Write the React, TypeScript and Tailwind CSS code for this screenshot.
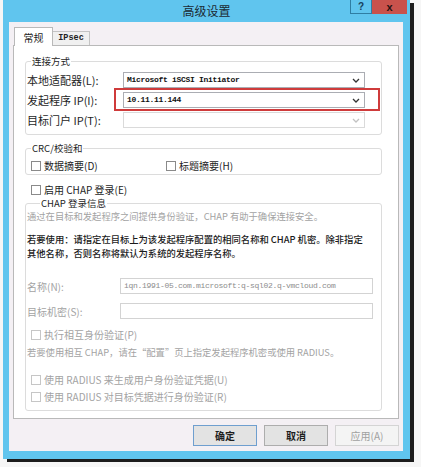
import React from 'react';

const cjk = "font-['Noto_Sans_CJK_SC','Liberation_Sans',sans-serif]";
const mono = "font-['Liberation_Mono',monospace]";

function Chevron({ disabled }: { disabled?: boolean }) {
  return (
    <svg width="8" height="5" viewBox="0 0 8 5" className="shrink-0">
      <path d="M1 1l3 3 3-3" stroke={disabled ? '#c2c2c2' : '#333'} strokeWidth="1.3" fill="none" />
    </svg>
  );
}

function Select({ value, disabled }: { value?: string; disabled?: boolean }) {
  return (
    <div className={`flex items-center w-[242px] h-[16px] border bg-white pl-[3px] pr-[4px] ${disabled ? 'border-[#dadada]' : 'border-[#abadb3]'}`}>
      <span className={`flex-1 ${mono} text-[8px] leading-[14px] font-bold tracking-[-0.3px] text-[#111] whitespace-nowrap`}>{value}</span>
      <Chevron disabled={disabled} />
    </div>
  );
}

function Box({ disabled }: { disabled?: boolean }) {
  return <span className={`inline-block shrink-0 w-[10px] h-[10px] border bg-white ${disabled ? 'border-[#c6c6c6]' : 'border-[#8a8a8a]'}`} />;
}

function Check({ label, disabled }: { label: string; disabled?: boolean }) {
  return (
    <div className="flex items-center gap-[3px] h-[12px]">
      <Box disabled={disabled} />
      <span className={`${cjk} text-[10px] leading-[12px] whitespace-nowrap ${disabled ? 'text-[#a3a3a3]' : 'text-[#1e1e1e]'}`}>{label}</span>
    </div>
  );
}

export default function App() {
  return (
    <div className={`w-[421px] h-[467px] bg-[#f6f6f6] pl-[3px] ${cjk}`}>
      <div className="w-[407px] h-[459px] bg-[#60c5ee] shadow-[4px_3px_0_#1c1c1c] flex flex-col">
        {/* title bar */}
        <div className="h-[22px] grid grid-cols-[1fr_auto_1fr]">
          <div />
          <div className="pt-[3px] text-[12px] leading-[15px] text-[#1b2a33]">高级设置</div>
          <div className="flex justify-end items-start pr-[3px]">
            <div className="w-[22px] h-[14px] border border-[#2f7ea3] border-t-0 flex items-center justify-center text-[10px] font-bold text-[#173f5c] font-['Liberation_Sans',sans-serif]">?</div>
            <div className="w-[35px] h-[14px] bg-[#c9524c] flex items-center justify-center text-[11px] leading-[12px] font-bold text-[#2a1212] font-['Liberation_Sans',sans-serif]">x</div>
          </div>
        </div>

        {/* client */}
        <div className="ml-[6px] w-[394px] h-[429px] bg-[#f4f0f4] flex flex-col px-[4px] pt-[5px]">
          <div className="flex items-end h-[18px]">
            <div className="ml-[1px] w-[39px] h-[19px] -mb-[1px] relative z-10 bg-white border border-[#b9b9b9] border-b-0 flex items-center justify-center text-[10px] text-[#1e1e1e]">常规</div>
            <div className={`w-[37px] h-[14px] bg-[#f0f0f0] border border-[#c4c4c4] border-b-0 border-l-0 flex items-center justify-center ${mono} text-[8.5px] font-bold text-[#222]`}>IPsec</div>
          </div>

          <div className="w-[386px] h-[374px] bg-white border border-[#b9b9b9] pt-[9px] pl-[11px]">
            {/* 连接方式 */}
            <fieldset className="w-[357px] border border-[#dcdcdc] rounded-[3px] pb-[6px]">
              <legend className="ml-[5px] px-[1px] text-[9.5px] leading-[12px] text-[#1e1e1e]">连接方式</legend>
              <div className="flex flex-col gap-[4px] mt-[5px] pl-[1px]">
                <div className="flex items-center h-[16px]">
                  <span className="w-[96px] text-[11px] text-[#1e1e1e] whitespace-nowrap">本地适配器(L):</span>
                  <Select value="Microsoft iSCSI Initiator" />
                </div>
                <div className="flex items-center h-[16px]">
                  <span className="w-[96px] text-[11px] text-[#1e1e1e] whitespace-nowrap">发起程序 IP(I):</span>
                  <div className="relative">
                    <Select value="10.11.11.144" />
                    <span className="absolute -left-[9px] -right-[15px] -top-[4px] -bottom-[3px] border-2 border-[#cf3b3b]" />
                  </div>
                </div>
                <div className="flex items-center h-[16px]">
                  <span className="w-[96px] text-[11px] text-[#1e1e1e] whitespace-nowrap">目标门户 IP(T):</span>
                  <Select disabled />
                </div>
              </div>
            </fieldset>

            {/* CRC */}
            <fieldset className="mt-[7px] w-[357px] border border-[#dcdcdc] rounded-[3px] pb-[2px]">
              <legend className="ml-[5px] px-[1px] text-[9.5px] leading-[12px] text-[#1e1e1e]">CRC/校验和</legend>
              <div className="flex mt-[6px] pl-[5px]">
                <div className="w-[135px]"><Check label="数据摘要(D)" /></div>
                <Check label="标题摘要(H)" />
              </div>
            </fieldset>

            <div className="mt-[9px] pl-[6px]">
              <Check label="启用 CHAP 登录(E)" />
            </div>

            {/* CHAP 登录信息 */}
            <fieldset className="mt-[1px] w-[357px] border border-[#dcdcdc] rounded-[3px] pb-[7px]">
              <legend className="ml-[14px] px-[1px] text-[9.5px] leading-[12px] text-[#1e1e1e]">CHAP 登录信息</legend>
              <div className="pl-[1px]">
                <p className="mt-[2px] text-[9.3px] leading-[10px] text-[#a3a3a3] whitespace-nowrap">通过在目标和发起程序之间提供身份验证，CHAP 有助于确保连接安全。</p>
                <p className="mt-[12px] text-[9.3px] leading-[13.5px] text-[#1a1a1a] font-medium whitespace-nowrap">
                  若要使用：请指定在目标上为该发起程序配置的相同名称和 CHAP 机密。除非指定
                  <br />
                  其他名称，否则名称将默认为系统的发起程序名称。
                </p>
                <div className="mt-[18px] flex items-center h-[16px]">
                  <span className="w-[93px] text-[10px] text-[#a3a3a3]">名称(N):</span>
                  <div className={`w-[253px] h-[16px] border border-[#d3d3d3] bg-white pl-[3px] ${mono} text-[8px] leading-[14px] tracking-[-0.3px] text-[#8c8c8c] whitespace-nowrap`}>iqn.1991-05.com.microsoft:q-sql02.q-vmcloud.com</div>
                </div>
                <div className="mt-[9px] flex items-center h-[16px]">
                  <span className="w-[93px] text-[10px] text-[#a3a3a3]">目标机密(S):</span>
                  <div className="w-[253px] h-[16px] border border-[#d3d3d3] bg-white" />
                </div>
                <div className="mt-[10px] pl-[4px]">
                  <Check label="执行相互身份验证(P)" disabled />
                </div>
                <p className="mt-[6px] text-[9.3px] leading-[10px] text-[#a3a3a3] whitespace-nowrap">若要使用相互 CHAP，请在“配置”页上指定发起程序机密或使用 RADIUS。</p>
                <div className="mt-[17px] pl-[4px]">
                  <Check label="使用 RADIUS 来生成用户身份验证凭据(U)" disabled />
                </div>
                <div className="mt-[5px] pl-[4px]">
                  <Check label="使用 RADIUS 对目标凭据进行身份验证(R)" disabled />
                </div>
              </div>
            </fieldset>
          </div>

          {/* buttons */}
          <div className="mt-[6px] flex justify-end gap-[7px]">
            <button className="w-[64px] h-[21px] bg-[#e3e3e3] border border-[#6f9fcf] text-[10px] font-bold text-[#1e1e1e]">确定</button>
            <button className="w-[64px] h-[21px] bg-[#e3e3e3] border border-[#adadad] text-[10px] font-bold text-[#1e1e1e]">取消</button>
            <button className="w-[64px] h-[21px] bg-[#f4f4f4] border border-[#d4d4d4] text-[10px] text-[#a0a0a0]">应用(A)</button>
          </div>
        </div>
      </div>
    </div>
  );
}
